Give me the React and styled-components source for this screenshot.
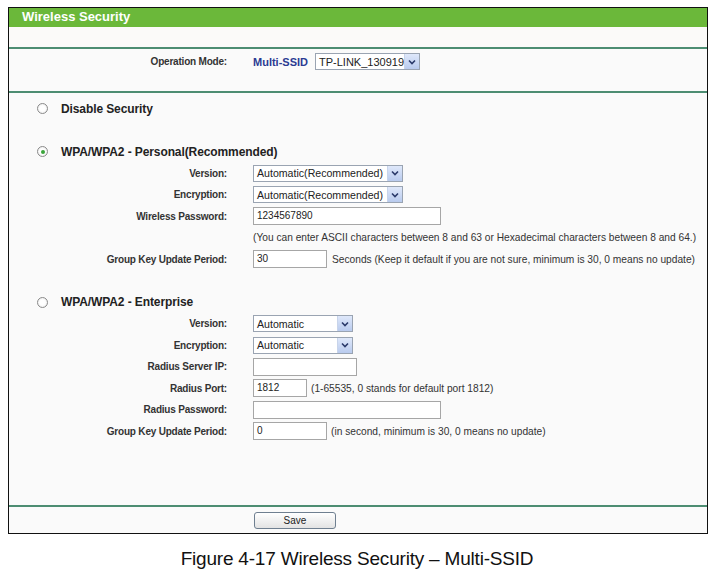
import React from 'react';
import styled, { createGlobalStyle } from 'styled-components';

const GlobalStyle = createGlobalStyle`
  html, body {
    margin: 0;
    padding: 0;
    background: #ffffff;
    font-family: "Liberation Sans", Arial, sans-serif;
  }
`;

const Page = styled.div`
  width: 714px;
  height: 576px;
  padding-top: 7px;
  box-sizing: border-box;
`;

const Frame = styled.div`
  margin-left: 8px;
  width: 700px;
  box-sizing: border-box;
  border: 1px solid #111;
  background: #fafafa;
`;

const TitleBar = styled.div`
  height: 19px;
  background: #6bb83a;
  color: #fff;
  font-weight: 700;
  font-size: 13px;
  line-height: 18px;
  padding-left: 13px;
`;

const Strip = styled.div`
  height: 20px;
  border-bottom: 2px solid #4d8d72;
  background: #fbfaf9;
`;

const ModeRow = styled.div`
  height: 44px;
  padding-top: 2px;
  box-sizing: border-box;
  border-bottom: 2px solid #4d8d72;
`;

const Body = styled.div`
  height: 412px;
  padding-top: 5px;
  box-sizing: border-box;
`;

const Row = styled.div`
  display: grid;
  grid-template-columns: 218px 1fr;
  column-gap: 26px;
  align-items: center;
  height: 21.5px;
`;

const Label = styled.div`
  text-align: right;
  font-size: 10px;
  font-weight: 700;
  letter-spacing: -0.2px;
  color: #333;
`;

const Field = styled.div`
  display: flex;
  align-items: center;
  gap: ${p => p.$gap || 5}px;
  font-size: 10.2px;
  color: #333;
  white-space: nowrap;
`;

const Ssid = styled.span`
  font-weight: 700;
  font-size: 11px;
  color: #2b3a92;
  margin-right: 2px;
`;

const Heading = styled.div`
  display: flex;
  align-items: center;
  height: 21.5px;
  padding-left: 28px;
  font-size: 12px;
  font-weight: 700;
  letter-spacing: -0.1px;
  color: #222;
`;

const Radio = styled.span`
  width: 9px;
  height: 9px;
  border-radius: 50%;
  border: 1px solid #8a8a8a;
  background: radial-gradient(circle, #fff 40%, #e4e4e4 100%);
  margin-right: 13px;
  display: flex;
  align-items: center;
  justify-content: center;
  &::after {
    content: '';
    width: 4px;
    height: 4px;
    border-radius: 50%;
    background: ${p => (p.$checked ? '#3aa43a' : 'transparent')};
  }
`;

const Spacer = styled.div`
  height: 21.5px;
`;

const SelectBox = styled.div`
  width: ${p => p.$w}px;
  height: 17px;
  box-sizing: border-box;
  border: 1px solid #9aa4b2;
  background: #fff;
  display: flex;
  align-items: center;
  justify-content: space-between;
  font-size: ${p => p.$fs || 10.6}px;
  color: #222;
  padding-left: 3px;
`;

const Arrow = styled.span`
  width: 14px;
  height: 15px;
  background: linear-gradient(#dfe8fa, #b9cbee);
  border-left: 1px solid #c8d4ea;
  display: flex;
  align-items: center;
  justify-content: center;
`;

const TextInput = styled.div`
  width: ${p => p.$w}px;
  height: 18px;
  box-sizing: border-box;
  border: 1px solid #a6a6a6;
  background: #fff;
  font-size: 10px;
  line-height: 16px;
  padding-left: 3px;
  color: #222;
`;

const Footer = styled.div`
  border-top: 2px solid #4d8d72;
  height: 26px;
  display: flex;
  align-items: center;
  padding-left: 245px;
`;

const SaveButton = styled.button`
  width: 82px;
  height: 17px;
  padding: 0;
  border: 1px solid #6f7f90;
  border-radius: 3px;
  background: linear-gradient(#ffffff, #e3e3e3);
  font-family: "Liberation Sans", Arial, sans-serif;
  font-size: 10px;
  color: #222;
`;

const Caption = styled.div`
  text-align: center;
  font-size: 19px;
  line-height: 22px;
  color: #111;
  margin-top: 14px;
  letter-spacing: -0.2px;
`;

const Select = ({ width, value, fs }) => (
  <SelectBox $w={width} $fs={fs}>
    <span>{value}</span>
    <Arrow>
      <svg width="8" height="6" viewBox="0 0 8 6">
        <path d="M1 1.5 L4 4.5 L7 1.5" fill="none" stroke="#2b3a6a" strokeWidth="1.6" />
      </svg>
    </Arrow>
  </SelectBox>
);

const FormRow = ({ label, children, gap }) => (
  <Row>
    <Label>{label}</Label>
    <Field $gap={gap}>{children}</Field>
  </Row>
);

export default function App() {
  return (
    <Page>
      <GlobalStyle />
      <Frame>
        <TitleBar>Wireless Security</TitleBar>
        <Strip />
        <ModeRow>
          <FormRow label="Operation Mode:">
            <Ssid>Multi-SSID</Ssid>
            <Select width={105} fs={11} value="TP-LINK_130919" />
          </FormRow>
        </ModeRow>
        <Body>
          <Heading>
            <Radio />
            Disable Security
          </Heading>
          <Spacer />
          <Heading>
            <Radio $checked />
            WPA/WPA2 - Personal(Recommended)
          </Heading>
          <FormRow label="Version:">
            <Select width={150} value="Automatic(Recommended)" />
          </FormRow>
          <FormRow label="Encryption:">
            <Select width={150} value="Automatic(Recommended)" />
          </FormRow>
          <FormRow label="Wireless Password:">
            <TextInput $w={188}>1234567890</TextInput>
          </FormRow>
          <FormRow label="">
            (You can enter ASCII characters between 8 and 63 or Hexadecimal characters between 8 and 64.)
          </FormRow>
          <FormRow label="Group Key Update Period:">
            <TextInput $w={74}>30</TextInput>
            Seconds (Keep it default if you are not sure, minimum is 30, 0 means no update)
          </FormRow>
          <Spacer />
          <Heading>
            <Radio />
            WPA/WPA2 - Enterprise
          </Heading>
          <FormRow label="Version:">
            <Select width={100} value="Automatic" />
          </FormRow>
          <FormRow label="Encryption:">
            <Select width={100} value="Automatic" />
          </FormRow>
          <FormRow label="Radius Server IP:">
            <TextInput $w={104} />
          </FormRow>
          <FormRow label="Radius Port:" gap={4}>
            <TextInput $w={54}>1812</TextInput>
            (1-65535, 0 stands for default port 1812)
          </FormRow>
          <FormRow label="Radius Password:">
            <TextInput $w={188} />
          </FormRow>
          <FormRow label="Group Key Update Period:" gap={4}>
            <TextInput $w={74}>0</TextInput>
            (in second, minimum is 30, 0 means no update)
          </FormRow>
        </Body>
        <Footer>
          <SaveButton>Save</SaveButton>
        </Footer>
      </Frame>
      <Caption>Figure 4-17 Wireless Security – Multi-SSID</Caption>
    </Page>
  );
}
